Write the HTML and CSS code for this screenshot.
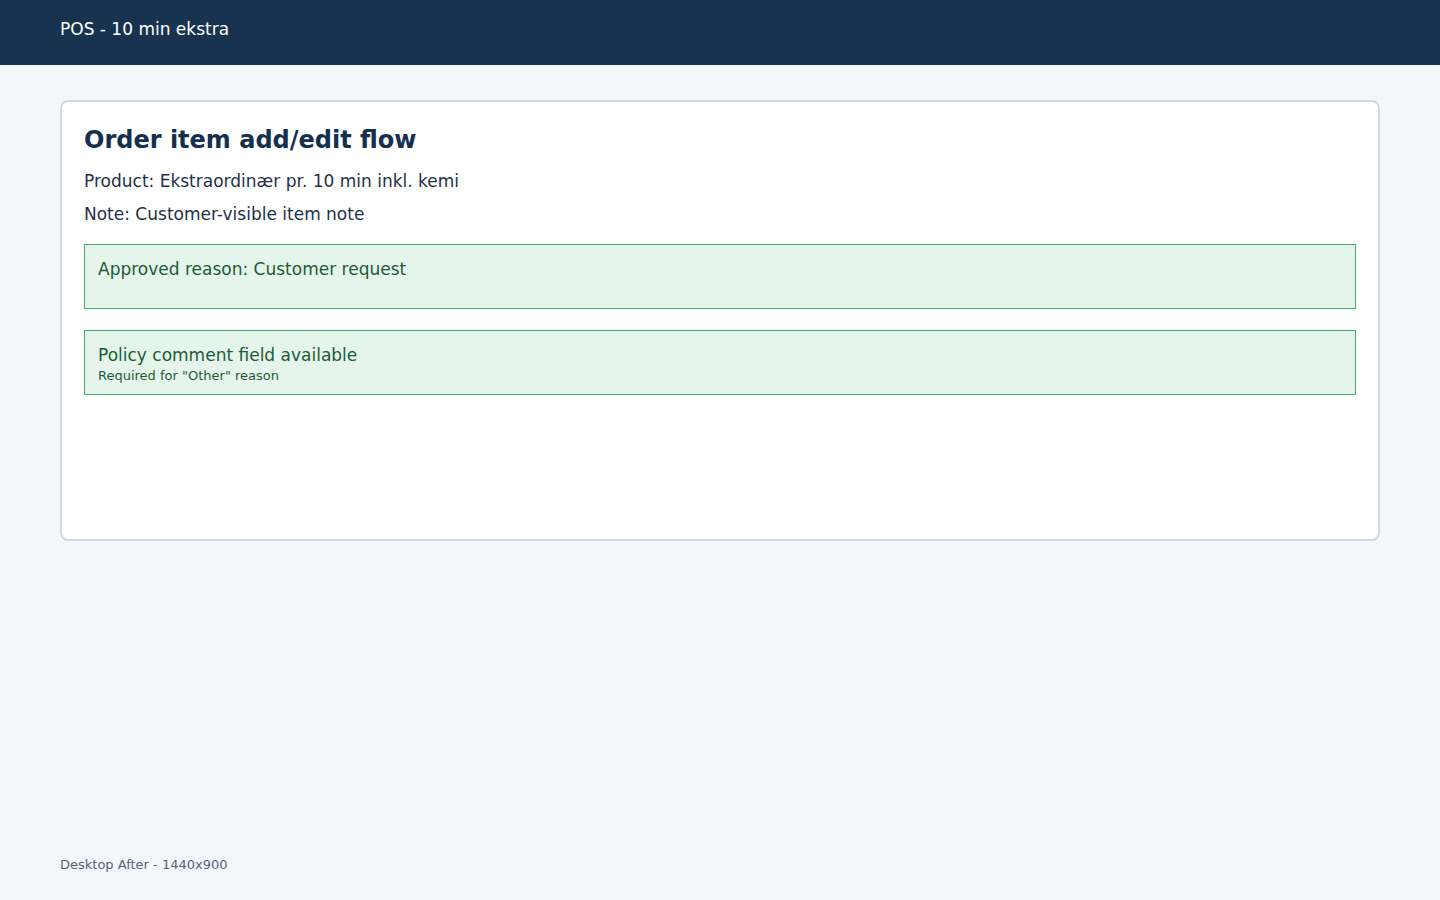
FILE: index.html
```html
<!DOCTYPE html>
<html lang="en">
<head>
  <meta charset="UTF-8">
  <meta name="viewport" content="width=device-width, initial-scale=1.0">
  <title>POS - 10 min ekstra</title>
  <link rel="stylesheet" href="styles.css">
</head>
<body>
  <header class="topbar">
    <span class="topbar-title">POS - 10 min ekstra</span>
  </header>

  <main class="page">
    <section class="card">
      <h1 class="card-title">Order item add/edit flow</h1>
      <p class="line">Product: Ekstraordinær pr. 10 min inkl. kemi</p>
      <p class="line">Note: Customer-visible item note</p>

      <div class="notice">
        <div class="notice-title">Approved reason: Customer request</div>
        <div class="notice-sub"></div>
      </div>

      <div class="notice">
        <div class="notice-title">Policy comment field available</div>
        <div class="notice-sub">Required for "Other" reason</div>
      </div>
    </section>
  </main>

  <footer class="caption">Desktop After - 1440x900</footer>
</body>
</html>
```

FILE: styles.css
```css
* {
  margin: 0;
  padding: 0;
  box-sizing: border-box;
}

html, body {
  height: 100%;
}

body {
  font-family: "DejaVu Sans", "Noto Sans", sans-serif;
  background: #f3f7fc;
  color: #1f3048;
  display: flex;
  flex-direction: column;
}

.topbar {
  height: 65px;
  background: #183350;
  color: #ffffff;
  padding: 19px 60px 0;
  font-size: 17px;
  line-height: 20px;
}

.page {
  flex: 1;
  padding: 35px 60px 0;
}

.card {
  min-height: 441px;
  background: #ffffff;
  border: 2px solid #cfd9e6;
  border-radius: 8px;
  padding: 23px 22px 22px;
}

.card-title {
  font-size: 24px;
  line-height: 30px;
  font-weight: bold;
  color: #15304f;
  margin-bottom: 15px;
}

.line {
  font-size: 17px;
  line-height: 22px;
  margin-bottom: 11px;
}

.notice {
  margin-top: 21px;
  background: #e6f5ec;
  border: 1px solid #3fae6f;
  color: #1d5b35;
  padding: 13px 13px 10px;
}

.line + .notice {
  margin-top: 19px;
}

.notice-title {
  font-size: 17px;
  line-height: 23px;
}

.notice-sub {
  font-size: 13px;
  line-height: 17px;
  min-height: 17px;
}

.caption {
  padding: 0 60px 19px;
  font-size: 13px;
  line-height: 32px;
  color: #52647b;
}
```
